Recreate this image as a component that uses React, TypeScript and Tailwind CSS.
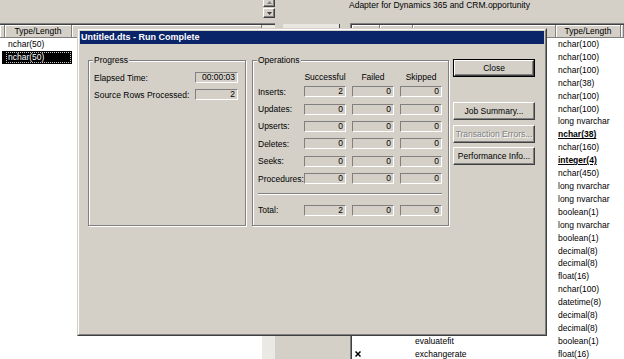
import React from "react";

const RAISED =
  "border border-t-white border-l-white border-b-[#404040] border-r-[#404040] shadow-[inset_-1px_-1px_0_#808080]";
const SUNKEN =
  "border border-t-[#808080] border-l-[#808080] border-b-white border-r-white";
const HEAD =
  "h-full bg-[#d4d0c8] border-r border-b border-r-[#808080] border-b-[#808080] shadow-[inset_1px_1px_0_#ffffff] text-center leading-[12px] overflow-hidden whitespace-nowrap";

const rightRows: { t: string; b?: boolean; name?: string; x?: boolean }[] = [
  { t: "nchar(100)" },
  { t: "nchar(100)" },
  { t: "nchar(100)" },
  { t: "nchar(38)" },
  { t: "nchar(100)" },
  { t: "nchar(100)" },
  { t: "long nvarchar" },
  { t: "nchar(38)", b: true },
  { t: "nchar(160)" },
  { t: "integer(4)", b: true },
  { t: "nchar(450)" },
  { t: "long nvarchar" },
  { t: "long nvarchar" },
  { t: "boolean(1)" },
  { t: "long nvarchar" },
  { t: "boolean(1)" },
  { t: "decimal(8)" },
  { t: "decimal(8)" },
  { t: "float(16)" },
  { t: "nchar(100)" },
  { t: "datetime(8)" },
  { t: "decimal(8)" },
  { t: "decimal(8)" },
  { t: "boolean(1)", name: "evaluatefit" },
  { t: "float(16)", name: "exchangerate", x: true },
];

const ops: { label: string; v: [string, string, string] }[] = [
  { label: "Inserts:", v: ["2", "0", "0"] },
  { label: "Updates:", v: ["0", "0", "0"] },
  { label: "Upserts:", v: ["0", "0", "0"] },
  { label: "Deletes:", v: ["0", "0", "0"] },
  { label: "Seeks:", v: ["0", "0", "0"] },
  { label: "Procedures:", v: ["0", "0", "0"] },
];

function Box({ value }: { value: string }) {
  return (
    <div
      className={`w-[42px] h-[11px] ${SUNKEN} bg-[#d4d0c8] text-right pr-[2px] leading-[9px]`}
    >
      {value}
    </div>
  );
}

function OpRow({ label, v }: { label: string; v: [string, string, string] }) {
  return (
    <div className="h-[17.4px] flex items-center">
      <div className="w-[46px] whitespace-nowrap leading-[10px]">{label}</div>
      <Box value={v[0]} />
      <div className="ml-[6px]">
        <Box value={v[1]} />
      </div>
      <div className="ml-[6px]">
        <Box value={v[2]} />
      </div>
    </div>
  );
}

function Btn({
  label,
  disabled,
  def,
}: {
  label: string;
  disabled?: boolean;
  def?: boolean;
}) {
  const inner = (
    <div
      className={`h-full w-full ${RAISED} bg-[#d4d0c8] flex items-center justify-center leading-[10px] whitespace-nowrap ${
        disabled ? "text-[#808080] [text-shadow:1px_1px_0_#ffffff]" : "text-black"
      }`}
    >
      {label}
    </div>
  );
  if (def) {
    return <div className="w-[82px] h-[18px] border border-black">{inner}</div>;
  }
  return <div className="w-[82px] h-[18px]">{inner}</div>;
}

export default function App() {
  return (
    <div className="relative w-[624px] h-[359px] overflow-hidden bg-[#d4d0c8] font-['Liberation_Sans',Arial,sans-serif] text-[8.5px] text-black">
      {/* top band */}
      <div className="h-[23px] flex">
        <div className="w-[263px]" />
        <div className="w-[12px] flex flex-col -mt-[2px]">
          <div className={`h-[9px] ${RAISED} bg-[#d4d0c8] flex items-center justify-center`}>
            <svg width="5" height="3" viewBox="0 0 5 3">
              <path d="M2.5 0L5 3H0z" fill="#808080" />
            </svg>
          </div>
          <div className={`mt-[1px] h-[10px] ${RAISED} bg-[#d4d0c8] flex items-center justify-center`}>
            <svg width="5" height="3" viewBox="0 0 5 3">
              <path d="M0 0H5L2.5 3z" fill="#404040" />
            </svg>
          </div>
        </div>
        <div className="ml-[74px] leading-[10px] whitespace-nowrap">
          Adapter for Dynamics 365 and CRM.opportunity
        </div>
      </div>

      {/* panels */}
      <div className="flex h-[336px]">
        {/* left list */}
        <div className="w-[275px] flex flex-col border-t border-[#808080]">
          <div className="flex-1 flex border-t border-[#404040]">
            <div className="w-[262px] bg-white flex flex-col">
              <div className="h-[13px] flex">
                <div className={`w-[5px] ${HEAD}`} />
                <div className={`w-[67px] ${HEAD}`}>Type/Length</div>
                <div className={`flex-1 ${HEAD}`} />
              </div>
              <div className="h-[12.92px] leading-[12.92px] flex">
                <div className="w-[5px]" />
                <div className="pl-[3px]">nchar(50)</div>
              </div>
              <div className="h-[12.92px] leading-[12.92px] flex">
                <div className="w-[5px] pl-[2px]">
                  <div className="h-full bg-black" />
                </div>
                <div className="w-[67px] bg-black text-white pl-[3px] relative">
                  <div className="absolute inset-[1px] border border-dotted border-[#c8c8c8]" />
                  <span className="relative">nchar(50)</span>
                </div>
              </div>
            </div>
            <div className="w-[13px] bg-[#ebe9e4]" />
          </div>
        </div>

        {/* gap between lists */}
        <div className="w-[75px] flex flex-col">
          <div className="mt-[1px] ml-[8px] w-[57px] h-[6px] bg-[#e9e7e2] border-r border-[#404040]" />
        </div>

        {/* right list */}
        <div className="flex-1 flex flex-col border-t border-l border-[#808080]">
          <div className="flex-1 flex flex-col border-t border-l border-[#404040] bg-white">
            <div className="h-[13px] flex">
              <div className={`w-[28px] ${HEAD}`} />
              <div className={`w-[33px] ${HEAD}`} />
              <div className={`w-[143px] ${HEAD}`} />
              <div className={`w-[65px] ${HEAD}`}>Type/Length</div>
              <div className={`flex-1 ${HEAD}`} />
            </div>
            {rightRows.map((r, i) => (
              <div key={i} className="h-[12.92px] leading-[12.92px] flex whitespace-nowrap">
                <div className="w-[61px] pl-[3px] flex items-center">
                  {r.x ? (
                    <svg width="6" height="6" viewBox="0 0 6 6">
                      <path d="M0.5 0.5L5.5 5.5M5.5 0.5L0.5 5.5" stroke="#000" strokeWidth="1.5" />
                    </svg>
                  ) : null}
                </div>
                <div className="w-[143px] pl-[2px]">{r.name ?? ""}</div>
                <div className={`pl-[2px] ${r.b ? "font-bold underline" : ""}`}>{r.t}</div>
              </div>
            ))}
          </div>
        </div>
      </div>

      {/* dialog */}
      <div className="absolute left-[77px] top-[28px] w-[470px] h-[308px] border border-t-[#d4d0c8] border-l-[#d4d0c8] border-b-[#404040] border-r-[#404040] bg-[#d4d0c8]">
        <div className="h-full border border-t-white border-l-white border-b-[#808080] border-r-[#808080] p-px flex flex-col">
          <div className="h-[13px] shrink-0 bg-[#0a246a] text-white font-bold text-[9px] leading-[13px] pl-[1px] whitespace-nowrap">
            Untitled.dts - Run Complete
          </div>
          <div className="flex items-stretch pt-[11px] pl-[8px]">
            {/* Progress */}
            <div className="w-[158px] mt-[5px] border border-[#808080] shadow-[1px_1px_0_#ffffff,inset_1px_1px_0_#ffffff] px-[5px]">
              <div className="-mt-[6px] -ml-[1px] w-fit px-[1px] bg-[#d4d0c8] leading-[10px]">
                Progress
              </div>
              <div className="mt-[4px]">
                <div className="h-[17px] flex items-center">
                  <div className="w-[101px] leading-[10px] whitespace-nowrap">Elapsed Time:</div>
                  <div className={`w-[43px] h-[11px] ${SUNKEN} text-right pr-[2px] leading-[9px]`}>
                    00:00:03
                  </div>
                </div>
                <div className="h-[17px] flex items-center">
                  <div className="w-[101px] leading-[10px] whitespace-nowrap">
                    Source Rows Processed:
                  </div>
                  <div className={`w-[43px] h-[11px] ${SUNKEN} text-right pr-[2px] leading-[9px]`}>
                    2
                  </div>
                </div>
              </div>
            </div>

            {/* Operations */}
            <div className="w-[197px] ml-[6px] mt-[5px] border border-[#808080] shadow-[1px_1px_0_#ffffff,inset_1px_1px_0_#ffffff] pl-[5px] pr-[6px] pb-[6px]">
              <div className="-mt-[6px] -ml-[1px] w-fit px-[1px] bg-[#d4d0c8] leading-[10px]">
                Operations
              </div>
              <div className="mt-[6px] h-[12px] flex items-center leading-[10px]">
                <div className="w-[46px]" />
                <div className="w-[42px] text-center">Successful</div>
                <div className="w-[42px] ml-[6px] text-center">Failed</div>
                <div className="w-[42px] ml-[6px] text-center">Skipped</div>
              </div>
              {ops.map((o) => (
                <OpRow key={o.label} label={o.label} v={o.v} />
              ))}
              <div className="mt-[6px] h-[2px] border-t border-b border-t-[#808080] border-b-white" />
              <div className="mt-[6px]">
                <OpRow label="Total:" v={["2", "0", "0"]} />
              </div>
            </div>

            {/* Buttons */}
            <div className="ml-[4px] pt-[4px] flex flex-col self-start">
              <Btn label="Close" def />
              <div className="mt-[25px]">
                <Btn label="Job Summary..." />
              </div>
              <div className="mt-[5px]">
                <Btn label="Transaction Errors..." disabled />
              </div>
              <div className="mt-[4px]">
                <Btn label="Performance Info..." />
              </div>
            </div>
          </div>
        </div>
      </div>
    </div>
  );
}
